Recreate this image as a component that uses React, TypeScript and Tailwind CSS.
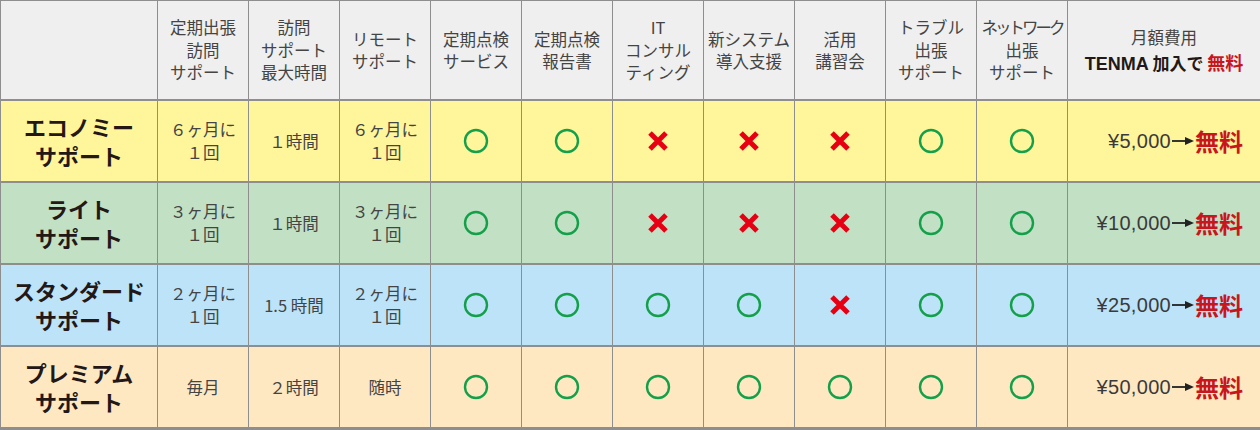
import React from "react";

const JP = { fontFamily: '"Noto Sans CJK JP", "Noto Sans", sans-serif' };

function Circle() {
  return (
    <svg width="26" height="26" viewBox="0 0 26 26">
      <circle cx="13" cy="13" r="11" fill="none" stroke="#14a04a" strokeWidth="2.4" />
    </svg>
  );
}

function Cross() {
  return (
    <svg width="22" height="20" viewBox="0 0 22 20">
      <path d="M3 2 L19 18 M19 2 L3 18" stroke="#e60012" strokeWidth="5" strokeLinecap="butt" />
    </svg>
  );
}

function Arrow() {
  return (
    <svg width="22" height="10" viewBox="0 0 22 10" className="mx-[1px]">
      <path d="M0 5 H15" stroke="#222" strokeWidth="1.8" />
      <path d="M13 1 L22 5 L13 9 Z" fill="#222" />
    </svg>
  );
}

type Row = {
  name: [string, string];
  bg: string;
  a: string[];
  b: string[];
  c: string[];
  marks: boolean[];
  price: string;
};

const rows: Row[] = [
  {
    name: ["エコノミー", "サポート"],
    bg: "bg-[#fff59a]",
    a: ["６ヶ月に", "１回"],
    b: ["１時間"],
    c: ["６ヶ月に", "１回"],
    marks: [true, true, false, false, false, true, true],
    price: "¥5,000",
  },
  {
    name: ["ライト", "サポート"],
    bg: "bg-[#c1e0c4]",
    a: ["３ヶ月に", "１回"],
    b: ["１時間"],
    c: ["３ヶ月に", "１回"],
    marks: [true, true, false, false, false, true, true],
    price: "¥10,000",
  },
  {
    name: ["スタンダード", "サポート"],
    bg: "bg-[#bde3f8]",
    a: ["２ヶ月に", "１回"],
    b: ["1.5 時間"],
    c: ["２ヶ月に", "１回"],
    marks: [true, true, true, true, false, true, true],
    price: "¥25,000",
  },
  {
    name: ["プレミアム", "サポート"],
    bg: "bg-[#fee8c2]",
    a: ["毎月"],
    b: ["２時間"],
    c: ["随時"],
    marks: [true, true, true, true, true, true, true],
    price: "¥50,000",
  },
];

const headers: string[][] = [
  ["定期出張", "訪問", "サポート"],
  ["訪問", "サポート", "最大時間"],
  ["リモート", "サポート"],
  ["定期点検", "サービス"],
  ["定期点検", "報告書"],
  ["IT", "コンサル", "ティング"],
  ["新システム", "導入支援"],
  ["活用", "講習会"],
  ["トラブル", "出張", "サポート"],
  ["ネットワーク", "出張", "サポート"],
];

function Lines({ lines, cls }: { lines: string[]; cls?: string }) {
  return (
    <div className={"flex flex-col items-center text-center " + (cls || "")}>
      {lines.map((l, i) => (
        <span key={i} className={l === "ネットワーク" ? "tracking-[-3px] whitespace-nowrap" : "whitespace-nowrap"}>
          {l}
        </span>
      ))}
    </div>
  );
}

export default function App() {
  return (
    <div
      style={JP}
      className="w-[1260px] h-[430px] bg-[#8e8e8e] pt-px pl-px pb-[1px] grid grid-cols-[156px_repeat(10,90px)_192px] grid-rows-[98px_80px_80px_80px_80px] gap-x-px gap-y-[2px] overflow-hidden"
    >
      {/* header */}
      <div className="bg-[#efefef]" />
      {headers.map((h, i) => (
        <div key={i} className="bg-[#efefef] flex items-center justify-center text-[16.5px] leading-[22.5px] text-[#444]">
          <Lines lines={h} />
        </div>
      ))}
      <div className="bg-[#efefef] flex flex-col items-center justify-center text-[#333] pt-[2px]">
        <span className="text-[16.5px] leading-[24px] text-[#444]">月額費用</span>
        <span className="text-[17px] leading-[26px] font-bold whitespace-nowrap">
          <span style={{ fontFamily: '"Liberation Sans", sans-serif' }} className="text-[#231815] font-bold text-[18px]">TENMA</span>
          <span className="text-[#231815]"> 加入で </span>
          <span className="text-[#c8161d] text-[18px]">無料</span>
        </span>
      </div>

      {rows.map((r, ri) => (
        <React.Fragment key={ri}>
          <div className={r.bg + " flex items-center justify-center"}>
            <Lines lines={r.name} cls="text-[22px] leading-[29px] font-bold text-[#231815]" />
          </div>
          {[r.a, r.b, r.c].map((t, ti) => (
            <div key={ti} className={r.bg + " flex items-center justify-center text-[16.5px] leading-[23px] text-[#444]"}>
              <Lines lines={t} />
            </div>
          ))}
          {r.marks.map((m, mi) => (
            <div key={mi} className={r.bg + " flex items-center justify-center"}>
              {m ? <Circle /> : <Cross />}
            </div>
          ))}
          <div className={r.bg + " flex items-center justify-end pr-[17px]"}>
            <span
              style={{ fontFamily: '"Liberation Sans", sans-serif' }}
              className="text-[20px] text-[#3a3a3a] tracking-[0.3px]"
            >
              {r.price}
            </span>
            <Arrow />
            <span className="text-[24px] font-bold text-[#c8161d] leading-none">無料</span>
          </div>
        </React.Fragment>
      ))}
    </div>
  );
}
